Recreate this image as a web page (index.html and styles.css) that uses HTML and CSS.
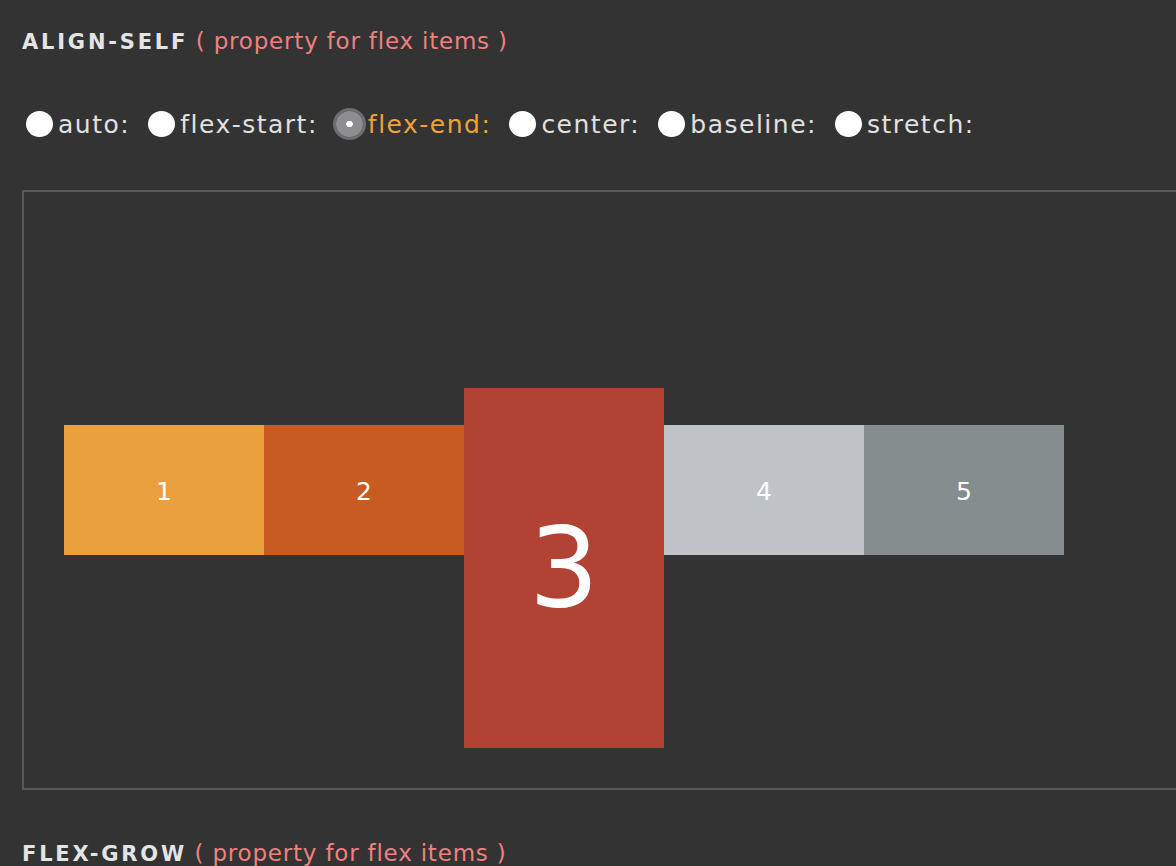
FILE: index.html
```html
<!DOCTYPE html>
<html>
<head>
<meta charset="utf-8">
<link rel="stylesheet" href="styles.css">
</head>
<body>
<section class="demo">
  <h2 class="title"><span class="name">ALIGN-SELF</span> <span class="note">( property for flex items )</span></h2>
  <form class="options">
    <label class="opt"><input type="radio" name="as"><span>auto:</span></label>
    <label class="opt"><input type="radio" name="as"><span>flex-start:</span></label>
    <label class="opt active"><input type="radio" name="as" checked><span>flex-end:</span></label>
    <label class="opt"><input type="radio" name="as"><span>center:</span></label>
    <label class="opt"><input type="radio" name="as"><span>baseline:</span></label>
    <label class="opt"><input type="radio" name="as"><span>stretch:</span></label>
  </form>
  <div class="stage">
    <div class="item c1">1</div>
    <div class="item c2">2</div>
    <div class="item c3 big">3</div>
    <div class="item c4">4</div>
    <div class="item c5">5</div>
  </div>
</section>
<section class="demo next">
  <h2 class="title"><span class="name">FLEX-GROW</span> <span class="note">( property for flex items )</span></h2>
</section>
</body>
</html>
```
FILE: styles.css
```css
html, body {
  margin: 0;
  padding: 0;
  background: #333333;
  overflow: hidden;
  height: 866px;
}
body {
  font-family: "DejaVu Sans", Verdana, sans-serif;
  color: #e2e2e2;
  padding-left: 22px;
}
.title {
  margin: 0;
  padding-top: 26px;
  line-height: 30px;
  font-weight: normal;
  white-space: nowrap;
}
.name {
  font-weight: bold;
  font-size: 21px;
  letter-spacing: 2.8px;
  color: #e4e4e4;
}
.note {
  font-size: 23px;
  letter-spacing: 0.8px;
  color: #f08080;
}
.options {
  display: flex;
  align-items: center;
  margin: 0;
  padding: 0 0 0 4px;
  height: 40px;
  margin-top: 47px;
}
.opt {
  display: inline-flex;
  align-items: center;
  gap: 5px;
  margin-right: 18px;
  font-size: 25px;
  letter-spacing: 1.5px;
  color: #e0e0e0;
}
.opt.active { color: #f0a234; }
.opt input {
  appearance: none;
  -webkit-appearance: none;
  margin: 0;
  width: 27px;
  height: 26px;
  border-radius: 50%;
  background: #ffffff;
  flex: none;
}
.opt input:checked {
  background: radial-gradient(circle, #ffffff 0 3px, #8e8e92 3.5px);
  box-shadow: 0 0 0 3px #6e6e70;
}
.stage {
  margin-top: 46px;
  width: 1200px;
  height: 516px;
  padding: 40px;
  border: 2px solid #585858;
  display: flex;
  align-items: center;
}
.item {
  width: 200px;
  height: 130px;
  flex: none;
  display: flex;
  align-items: center;
  justify-content: center;
  color: #ffffff;
  font-size: 25px;
  padding-top: 3px;
  box-sizing: border-box;
}
.item.big {
  height: 360px;
  align-self: flex-end;
  font-size: 110px;
  padding-top: 0;
}
.c1 { background: #e9a03d; }
.c2 { background: #c75b22; }
.c3 { background: #b24334; }
.c4 { background: #bfc2c6; }
.c5 { background: #858d8f; }
.next .title { padding-top: 48px; }
```
